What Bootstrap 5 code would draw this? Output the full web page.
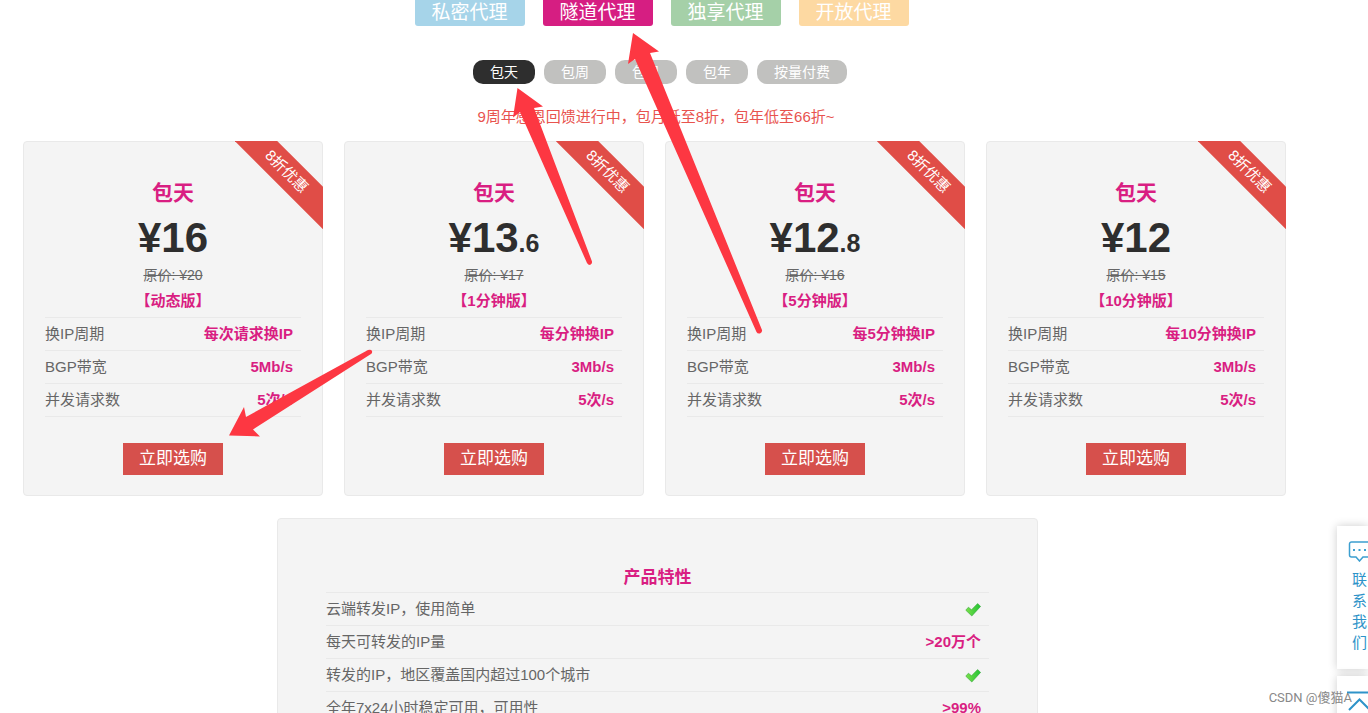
<!DOCTYPE html>
<html lang="zh-CN">
<head>
<meta charset="utf-8">
<meta name="viewport" content="width=device-width, initial-scale=1">
<title>隧道代理 - 选购</title>
<link href="https://cdn.jsdelivr.net/npm/bootstrap@5.3.0/dist/css/bootstrap.min.css" rel="stylesheet">
<style>
:root { --pink: #d91e82; --red: #e04d47; }
body { font-family: "Liberation Sans", "Noto Sans CJK SC", sans-serif; font-size: 15px; line-height: 24px; color: #666; background: #fff; }
.shop { padding: 0 82px 0 23px; }
.kinds { gap: 18px; padding-left: 14px; }
.kind { width: 110px; height: 26px; padding: 1px 0; border: 0; border-radius: 0 0 3px 3px; color: #fff; font-size: 19px; line-height: 24px; }
.kind-private { background: #a6d4e9; }
.kind-tunnel { background: #d61e82; }
.kind-solo { background: #a5d0a8; }
.kind-open { background: #fdd9a2; }
.periods { gap: 9px; margin-top: 34px; padding-left: 11px; }
.period { height: 24px; padding: 0 17px; border: 0; border-radius: 10px; background: #c1c1bf; color: #fff; font-size: 14px; line-height: 24px; }
.period.active { background: #2e2e2e; }
.notice { margin: 21px 0 12px; padding-left: 3px; color: #e8534e; }
.plans { display: grid; grid-template-columns: repeat(4, 1fr); gap: 21px; }
.plan, .features { background: #f4f4f4; border: 1px solid #e9e9e9; border-radius: 4px; }
.plan { padding: 36px 21px 20px; }
.plan h2 { margin: 0; font-size: 21px; line-height: 30px; font-weight: 700; color: var(--pink); }
.price { font-size: 42px; line-height: 60px; font-weight: 700; color: #2e2e2e; }
.cents { font-size: 25px; line-height: 1; }
.was { font-size: 14px; line-height: 14px; }
.edition { margin-top: 6px; padding-bottom: 4px; line-height: 25px; font-weight: 700; color: var(--pink); }
.specs { width: 100%; border-top: 1px solid #e9e9e9; }
.specs tr { height: 33px; border-bottom: 1px solid #e9e9e9; }
.specs th { padding: 0; font-weight: 400; }
.specs td { padding: 0 8px 0 0; text-align: right; font-weight: 700; color: var(--pink); }
.buy { width: 100px; height: 32px; margin-top: 26px; padding: 0; border: 0; background: #d6504c; color: #fff; font-size: 17px; line-height: 32px; vertical-align: top; }
.ribbon { top: -1px; right: -1px; width: 88px; height: 88px; }
.ribbon span { top: 17px; left: -27px; width: 160px; height: 30px; padding-right: 4px; line-height: 30px; transform: rotate(45deg); background: var(--red); color: #fff; }
.features-wrap { padding-left: 6px; }
.features { max-width: 761px; margin: 22px auto 0; padding: 45px 48px; }
.features h2 { margin: 0; font-size: 17px; line-height: 28px; font-weight: 700; color: var(--pink); }
.arrows { top: 0; left: 0; pointer-events: none; }
.side { top: 526px; right: 0; width: 31px; }
.side a { display: block; background: #fff; box-shadow: 0 0 10px rgba(0,0,0,.2); color: #2e93c9; text-decoration: none; overflow: hidden; }
.side .contact { height: 143px; padding-top: 15px; margin-bottom: 7px; }
.side .contact span { display: block; width: 15px; margin-left: 15px; line-height: 21px; margin-top: 7px; }
.side .totop { height: 60px; }
.side svg { display: block; }
.credit { right: 16px; bottom: 3px; font-family: Roboto, "Noto Sans CJK SC", sans-serif; font-size: 13px; color: #888; }
</style>
</head>
<body>
<div class="position-relative vh-100 overflow-hidden">
<main class="shop">
  <nav class="kinds d-flex justify-content-center">
    <button class="kind kind-private">私密代理</button>
    <button class="kind kind-tunnel">隧道代理</button>
    <button class="kind kind-solo">独享代理</button>
    <button class="kind kind-open">开放代理</button>
  </nav>
  <div class="periods d-flex justify-content-center">
    <button class="period active">包天</button>
    <button class="period">包周</button>
    <button class="period">包月</button>
    <button class="period">包年</button>
    <button class="period">按量付费</button>
  </div>
  <p class="notice text-center">9周年感恩回馈进行中，包月低至8折，包年低至66折~</p>

  <section class="plans text-center">
    <article class="plan position-relative">
      <div class="ribbon position-absolute overflow-hidden"><span class="position-absolute">8折优惠</span></div>
      <h2>包天</h2>
      <div class="price">¥16</div>
      <div class="was"><del>原价: ¥20</del></div>
      <div class="edition">【动态版】</div>
      <table class="specs text-start">
        <tr><th scope="row">换IP周期</th><td>每次请求换IP</td></tr>
        <tr><th scope="row">BGP带宽</th><td>5Mb/s</td></tr>
        <tr><th scope="row">并发请求数</th><td>5次/s</td></tr>
      </table>
      <button class="buy">立即选购</button>
    </article>
    <article class="plan position-relative">
      <div class="ribbon position-absolute overflow-hidden"><span class="position-absolute">8折优惠</span></div>
      <h2>包天</h2>
      <div class="price">¥13<span class="cents">.6</span></div>
      <div class="was"><del>原价: ¥17</del></div>
      <div class="edition">【1分钟版】</div>
      <table class="specs text-start">
        <tr><th scope="row">换IP周期</th><td>每分钟换IP</td></tr>
        <tr><th scope="row">BGP带宽</th><td>3Mb/s</td></tr>
        <tr><th scope="row">并发请求数</th><td>5次/s</td></tr>
      </table>
      <button class="buy">立即选购</button>
    </article>
    <article class="plan position-relative">
      <div class="ribbon position-absolute overflow-hidden"><span class="position-absolute">8折优惠</span></div>
      <h2>包天</h2>
      <div class="price">¥12<span class="cents">.8</span></div>
      <div class="was"><del>原价: ¥16</del></div>
      <div class="edition">【5分钟版】</div>
      <table class="specs text-start">
        <tr><th scope="row">换IP周期</th><td>每5分钟换IP</td></tr>
        <tr><th scope="row">BGP带宽</th><td>3Mb/s</td></tr>
        <tr><th scope="row">并发请求数</th><td>5次/s</td></tr>
      </table>
      <button class="buy">立即选购</button>
    </article>
    <article class="plan position-relative">
      <div class="ribbon position-absolute overflow-hidden"><span class="position-absolute">8折优惠</span></div>
      <h2>包天</h2>
      <div class="price">¥12</div>
      <div class="was"><del>原价: ¥15</del></div>
      <div class="edition">【10分钟版】</div>
      <table class="specs text-start">
        <tr><th scope="row">换IP周期</th><td>每10分钟换IP</td></tr>
        <tr><th scope="row">BGP带宽</th><td>3Mb/s</td></tr>
        <tr><th scope="row">并发请求数</th><td>5次/s</td></tr>
      </table>
      <button class="buy">立即选购</button>
    </article>
  </section>

  <div class="features-wrap">
  <section class="features">
    <h2 class="text-center">产品特性</h2>
    <table class="specs">
      <tr><th scope="row">云端转发IP，使用简单</th><td><svg width="16" height="14" viewBox="0 0 16 14"><path d="M.8 7.200l2.600-3L6.500 6.800 12.600.6l3 2.800L6.800 13z" fill="url(#tick)" stroke="#35a83a" stroke-width=".6" stroke-linejoin="round"/></svg></td></tr>
      <tr><th scope="row">每天可转发的IP量</th><td>&gt;20万个</td></tr>
      <tr><th scope="row">转发的IP，地区覆盖国内超过100个城市</th><td><svg width="16" height="14" viewBox="0 0 16 14"><path d="M.8 7.200l2.600-3L6.500 6.800 12.600.6l3 2.800L6.800 13z" fill="url(#tick)" stroke="#35a83a" stroke-width=".6" stroke-linejoin="round"/></svg></td></tr>
      <tr><th scope="row">全年7x24小时稳定可用，可用性</th><td>&gt;99%</td></tr>
    </table>
  </section>
  </div>
</main>

<aside class="side position-absolute">
  <a class="contact" href="#contact">
    <svg width="31" height="21" viewBox="0 0 31 21" fill="none" stroke="#3c9fd0" stroke-width="1.500"><path d="M34 1H14.500a2 2 0 0 0-2 2v11a2 2 0 0 0 2 2H19l3.500 4 3.500-4h8"/><path d="M16 9h2M21.500 9h2M27 9h2" stroke-width="2"/></svg>
    <span>联系我们</span>
  </a>
  <a class="totop" href="#top" aria-label="返回顶部">
    <svg width="31" height="37" viewBox="0 0 31 37" fill="none" stroke="#2e93c9" stroke-width="2"><path d="M10 16.500h21M12 34l10.500-10.500L33 34"/></svg>
  </a>
</aside>

<svg class="arrows position-absolute" width="800" height="460" viewBox="0 0 800 460" fill="#fd3742">
  <defs><linearGradient id="tick"><stop offset="0" stop-color="#7be04a"/><stop offset="1" stop-color="#22c335"/></linearGradient></defs>
  <path d="M517.500 88L543 106.500 534 108 592 261.500Q592.500 264 590 265 588 265 587 263L520 112 513 117.500z"/>
  <path d="M633 33L659 51.500 650 53 762 330Q762.500 332.500 760 333.500 757.500 334 756.500 332L635 59 628 64z"/>
  <path d="M229 435.500L244 407 246 417 368 350Q371 349 372 351 372.500 353 371 354L253 429.500 260 436.500z"/>
</svg>
<div class="credit position-absolute">CSDN @傻猫A</div>
</div>
<script src="https://cdn.jsdelivr.net/npm/bootstrap@5.3.0/dist/js/bootstrap.bundle.min.js"></script>
</body>
</html>
